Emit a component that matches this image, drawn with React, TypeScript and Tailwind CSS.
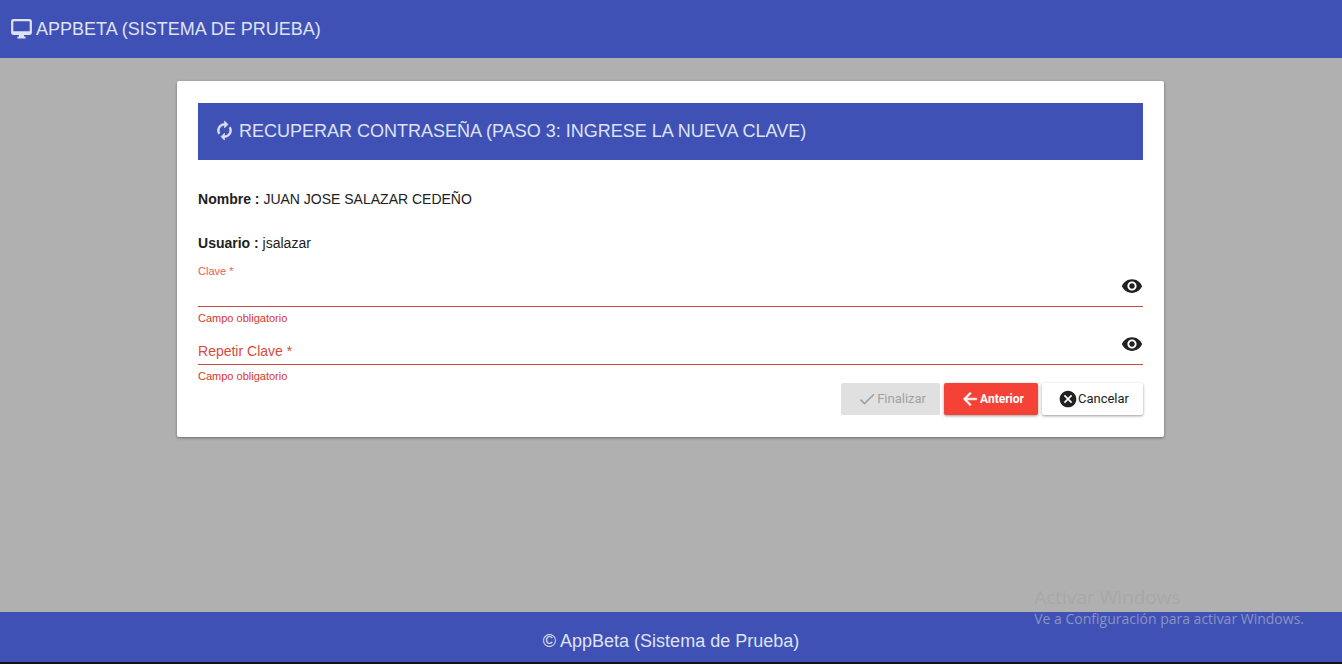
import { useState } from "react";
import type { ReactNode } from "react";
import { MdCheck, MdCancel, MdRemoveRedEye } from "react-icons/md";

function MonitorIcon() {
  return (
    <svg viewBox="0 0 22 20" className="h-5 w-[22px]" fill="none" aria-hidden="true">
      <rect x="1.2" y="1.2" width="18.6" height="13.6" rx="1.5" stroke="currentColor" strokeWidth="2.2" />
      <path d="M2 12.2h17v2.6H2zM8 15h5v2.500h1.500V19.500h-8V17.500H8z" fill="currentColor" />
    </svg>
  );
}

function RenewIcon() {
  return (
    <svg
      viewBox="0 0 24 24"
      className="size-[21px]"
      fill="currentColor"
      stroke="currentColor"
      strokeWidth="0.7"
      aria-hidden="true"
    >
      <path d="M12 6v3l4-4-4-4v3c-4.42 0-8 3.58-8 8 0 1.57.46 3.03 1.24 4.26L6.7 14.800c-.45-.83-.7-1.790-.7-2.800 0-3.310 2.690-6 6-6zm6.760 1.740L17.300 9.200c.44.840.7 1.790.7 2.800 0 3.310-2.690 6-6 6v-3l-4 4 4 4v-3c4.420 0 8-3.580 8-8 0-1.570-.46-3.030-1.240-4.260z" />
    </svg>
  );
}

function BackIcon() {
  return (
    <svg
      viewBox="0 0 24 24"
      className="size-5"
      fill="currentColor"
      stroke="currentColor"
      strokeWidth="0.7"
      aria-hidden="true"
    >
      <path d="M20 11H7.830l5.590-5.590L12 4l-8 8 8 8 1.410-1.410L7.830 13H20v-2z" />
    </svg>
  );
}

function DataRow({ label, children }: { label: string; children: ReactNode }) {
  return (
    <p className="text-[14px] leading-6 text-[#212121]">
      <strong className="font-bold">{label} :</strong> {children}
    </p>
  );
}

function PasswordField({
  id,
  label,
  raised = false,
}: {
  id: string;
  label: string;
  raised?: boolean;
}) {
  const [value, setValue] = useState("");
  const [visible, setVisible] = useState(false);
  const floating = raised || value !== "";
  return (
    <div>
      <div className="relative flex h-[41px] items-center border-b border-[#cb4a40]">
        <label
          htmlFor={id}
          className={
            floating
              ? "absolute top-0 left-0 text-[11px] leading-[10px] text-[#ee5a4f]"
              : "absolute bottom-1 left-0 text-[14px] leading-[18px] text-[#d9483d]"
          }
        >
          {label} *
        </label>
        <input
          id={id}
          type={visible ? "text" : "password"}
          required
          value={value}
          onChange={(e) => setValue(e.target.value)}
          className="h-full min-w-0 flex-1 bg-transparent pt-3 text-[14px] text-[#212121] outline-none"
        />
        <button
          type="button"
          aria-label={`Mostrar ${label}`}
          onClick={() => setVisible(!visible)}
          className="text-[#212121]"
        >
          <MdRemoveRedEye className="size-[22px]" />
        </button>
      </div>
      <p className="pt-[6px] text-[11px] leading-[11px] text-[#d9362b]">Campo obligatorio</p>
    </div>
  );
}

export default function App() {
  return (
    <div className="flex min-h-screen flex-col border-b-2 border-[#111116] bg-[#b0b0b0] font-['Liberation_Sans',Arial,sans-serif]">
      <header className="flex h-[58px] items-center gap-[3px] bg-[#3f51b5] px-[11px] text-[#dfe2f4]">
        <MonitorIcon />
        <h1 className="text-[18px] leading-6">APPBETA (SISTEMA DE PRUEBA)</h1>
      </header>

      <main className="flex-1 pt-[23px] pr-px pb-6">
        <section className="mx-auto w-[73.6%] rounded-[2px] bg-white px-[21px] py-[22px] shadow-[0_1px_3px_rgba(0,0,0,0.4)]">
          <div className="flex h-[57px] items-center gap-1 bg-[#3f51b5] px-4 pb-[2px] text-[#dfe2f4]">
            <RenewIcon />
            <h2 className="text-[18px] leading-6">
              RECUPERAR CONTRASEÑA (PASO 3: INGRESE LA NUEVA CLAVE)
            </h2>
          </div>

          <div className="flex flex-col gap-5 pt-[27px]">
            <DataRow label="Nombre">JUAN JOSE SALAZAR CEDEÑO</DataRow>
            <DataRow label="Usuario">jsalazar</DataRow>
          </div>

          <form onSubmit={(e) => e.preventDefault()}>
            <div className="flex flex-col pt-[11px] pb-px">
              <PasswordField id="clave" label="Clave" raised />
              <PasswordField id="repetir" label="Repetir Clave" />
            </div>
            <div className="flex justify-end gap-1 font-[Roboto,sans-serif] text-[13px] leading-4">
              <button
                type="submit"
                disabled
                className="flex h-8 items-center rounded-[2px] bg-[#e0e0e0] pr-[14px] pl-4 text-[#a0a0a0]"
              >
                <MdCheck className="size-5" />
                Finalizar
              </button>
              <button
                type="button"
                className="flex h-8 items-center rounded-[2px] bg-[#f44336] pr-[14px] pl-4 text-[12px] font-bold text-white shadow-[0_1px_3px_rgba(0,0,0,0.4)]"
              >
                <BackIcon />
                Anterior
              </button>
              <button
                type="button"
                className="flex h-8 items-center rounded-[2px] bg-white pr-[14px] pl-4 text-[#212121] shadow-[0_1px_3px_rgba(0,0,0,0.4)]"
              >
                <MdCancel className="size-5" />
                Cancelar
              </button>
            </div>
          </form>
        </section>
      </main>

      <footer className="relative flex h-[50px] items-center justify-center bg-[#3f51b5] pt-2 text-[18px] text-[#dfe2f4]">
        © AppBeta (Sistema de Prueba)
        <div className="pointer-events-none absolute right-[38px] bottom-[33px] font-['Open_Sans',sans-serif]">
          <p className="text-[19px] leading-6 text-[#a8a8a8]">Activar Windows</p>
          <p className="text-[14px] leading-5 text-[#8a93c4]">
            Ve a Configuración para activar Windows.
          </p>
        </div>
      </footer>
    </div>
  );
}
